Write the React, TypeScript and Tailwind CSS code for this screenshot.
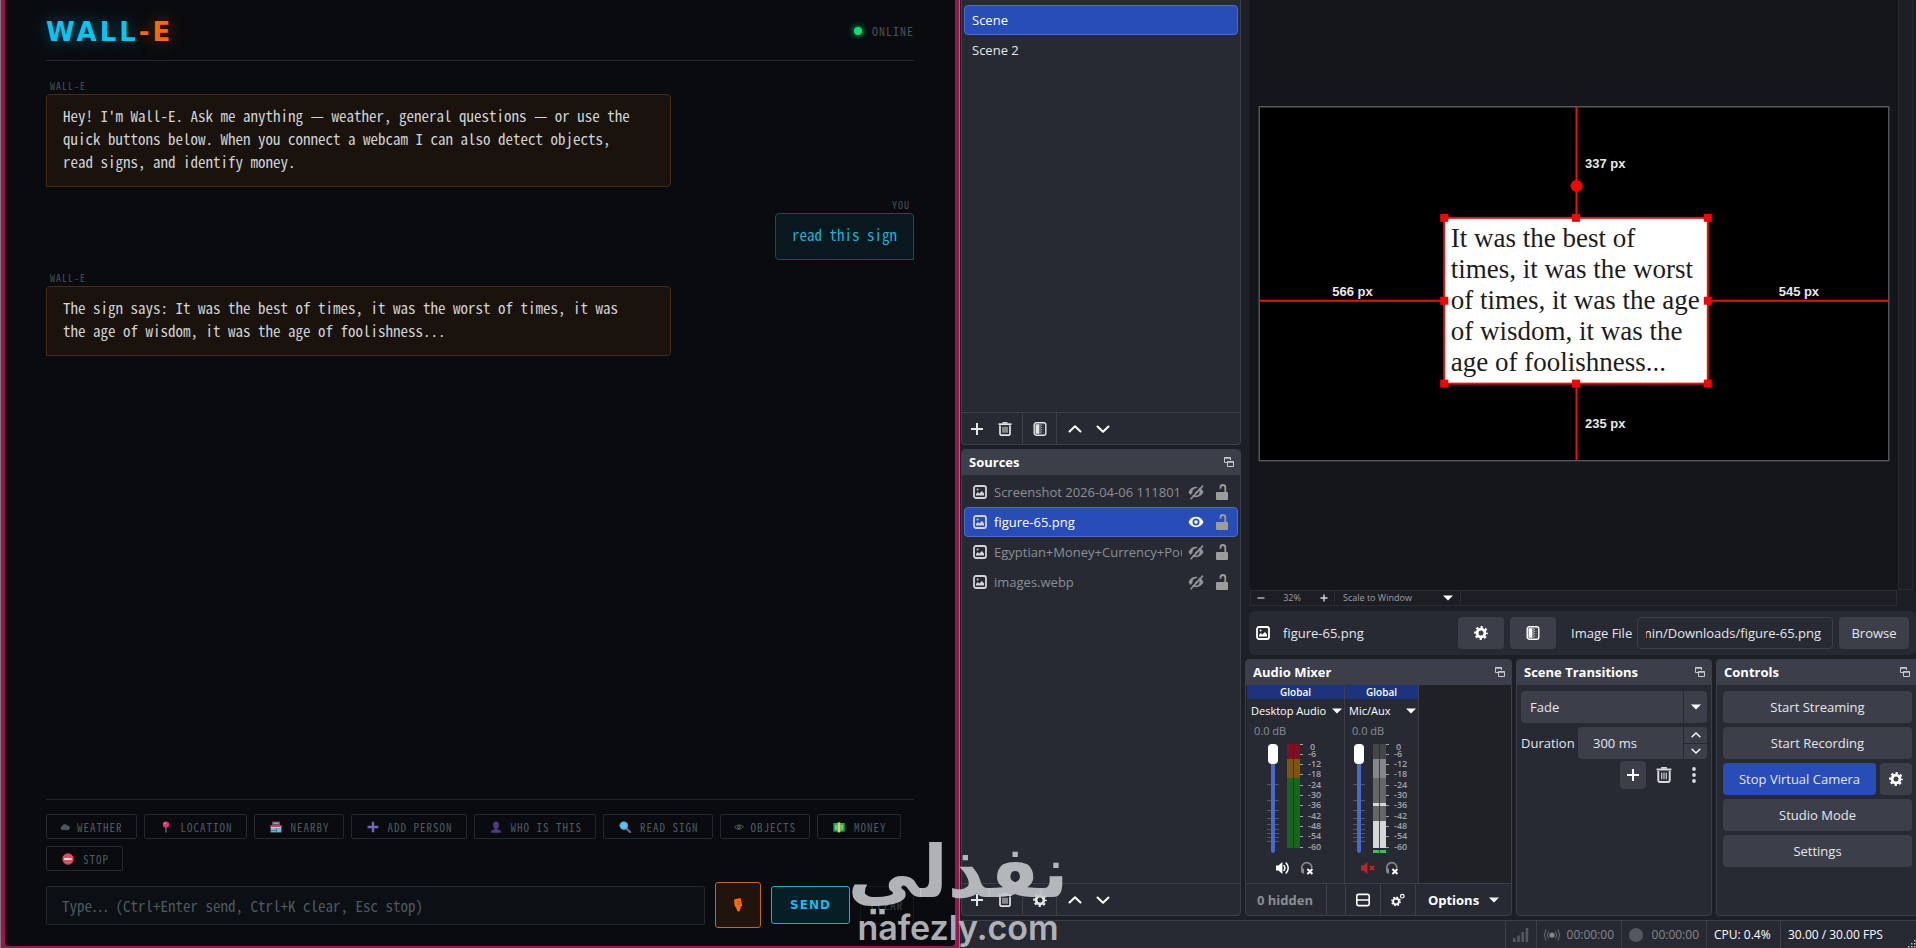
import type { ReactNode } from "react";

/* ---------- shared icons ---------- */

type IconProps = { className?: string };

const PlusIcon = ({ className = "w-3.5 h-3.5" }: IconProps) => (
  <svg className={className} viewBox="0 0 14 14" stroke="currentColor" strokeWidth="2" fill="none">
    <path d="M7 1v12M1 7h12" />
  </svg>
);

const TrashIcon = ({ className = "w-3.5 h-3.5" }: IconProps) => (
  <svg className={className} viewBox="0 0 14 14" fill="none" stroke="currentColor">
    <path d="M0.5 2.2h13" strokeWidth="1.8" />
    <path d="M4.5 0.8h5" strokeWidth="1.4" />
    <path d="M2 3.5v8.2a1.5 1.5 0 0 0 1.5 1.5h7a1.5 1.5 0 0 0 1.5-1.5V3.5" strokeWidth="1.7" />
    <path d="M5 4.8v6M7 4.8v6M9 4.8v6" strokeWidth="1" />
  </svg>
);

const FilterIcon = ({ className = "w-3.5 h-3.5" }: IconProps) => (
  <svg className={className} viewBox="0 0 14 14" fill="none">
    <rect x="1.2" y="0.8" width="11.6" height="12.4" rx="2" stroke="currentColor" strokeWidth="1.4" />
    <path d="M2.5 2.2h3.6v9.6H2.5z" fill="currentColor" />
    <path d="M7 2.2v9.6" stroke="currentColor" strokeWidth="1.2" strokeDasharray="1.2 0.8" />
    <path d="M8.6 2.8v9" stroke="currentColor" strokeWidth="1" strokeDasharray="1 1.2" opacity="0.8" />
    <path d="M10.2 2.2v9.6" stroke="currentColor" strokeWidth="0.8" strokeDasharray="0.8 1.8" opacity="0.6" />
  </svg>
);

const GearIcon = ({ className = "w-3.5 h-3.5" }: IconProps) => (
  <svg className={className} viewBox="0 0 14 14" fill="none" stroke="currentColor">
    <circle cx="7" cy="7" r="3.9" strokeWidth="2.8" />
    <circle cx="7" cy="7" r="5.8" strokeWidth="2.2" strokeDasharray="2.3 2.255" strokeDashoffset="1.15" />
  </svg>
);

const ChevronIcon = ({ down = false, className = "w-3.5 h-3.5" }: IconProps & { down?: boolean }) => (
  <svg className={className} viewBox="0 0 14 14" fill="none" stroke="currentColor" strokeWidth="2" strokeLinecap="round" strokeLinejoin="round">
    {down ? <path d="M1.5 4.5 7 9.8l5.5-5.3" /> : <path d="M1.5 9.5 7 4.2l5.5 5.3" />}
  </svg>
);

const CaretIcon = ({ className = "w-2.5 h-2.5" }: IconProps) => (
  <svg className={className} viewBox="0 0 10 10" fill="currentColor">
    <path d="M0 2.4h10L5 7.6z" />
  </svg>
);

const ImageIcon = ({ className = "w-3.5 h-3.5" }: IconProps) => (
  <svg className={className} viewBox="0 0 14 14" fill="none">
    <rect x="1" y="1" width="12" height="12" rx="2" stroke="currentColor" strokeWidth="1.8" />
    <path d="M3 10.6V9l1.8-2 1.4 1.4L9 6l2 2.4v2.2z" fill="currentColor" />
    <circle cx="4.6" cy="4.6" r="1" fill="currentColor" />
  </svg>
);

const PopoutIcon = () => (
  <svg className="w-2.5 h-2.5 text-[#c8cad0]" viewBox="0 0 10 10" fill="none" stroke="currentColor">
    <path d="M3.5 5.5h-3v-5h6v2.5" />
    <path d="M0.5 1h6" strokeWidth="1.4" />
    <path d="M3.5 4.5h6v5h-6z" />
    <path d="M3.5 5h6" strokeWidth="1.4" />
  </svg>
);

const EyeIcon = () => (
  <svg className="w-4 h-4 text-white" viewBox="0 0 16 16">
    <path d="M0.5 8C2 4.6 4.8 2.8 8 2.8S14 4.6 15.5 8C14 11.4 11.2 13.2 8 13.2S2 11.4 0.5 8z" fill="currentColor" />
    <circle cx="8" cy="8" r="3.5" fill="#284cb8" />
    <circle cx="8" cy="8" r="1.8" fill="currentColor" />
  </svg>
);

const EyeOffIcon = () => (
  <svg className="w-4 h-4 text-[#929498]" viewBox="0 0 16 16">
    <path d="M0.5 8C2 4.6 4.8 2.8 8 2.8S14 4.6 15.5 8C14 11.4 11.2 13.2 8 13.2S2 11.4 0.5 8z" fill="currentColor" />
    <circle cx="8" cy="8" r="3.5" fill="#272a33" />
    <circle cx="8" cy="8" r="1.8" fill="currentColor" />
    <path d="M13.4 0.2 1.2 13.8" stroke="#272a33" strokeWidth="2" />
    <path d="M15 1.6 2.6 15.2" stroke="currentColor" strokeWidth="1.6" />
  </svg>
);

const UnlockIcon = () => (
  <svg className="w-3 h-4 text-[#9c9c98]" viewBox="0 0 12 16" fill="none">
    <rect x="0" y="8" width="12" height="8" rx="1" fill="currentColor" />
    <path d="M9.3 8.5V3.4a2.4 2.4 0 0 0-4.8 0v1.4" stroke="currentColor" strokeWidth="1.8" />
  </svg>
);

/* ---------- chat window ---------- */

const quickActions: { label: string; icon: ReactNode }[] = [
  {
    label: "WEATHER",
    icon: (
      <svg className="w-2.5 h-3" viewBox="0 0 10 12" fill="#4b565c">
        <path d="M2.2 9A2 2 0 0 1 2 5.2 3 3 0 0 1 7.4 4.6 2.2 2.2 0 0 1 7.9 9z" />
      </svg>
    ),
  },
  {
    label: "LOCATION",
    icon: (
      <svg className="w-4 h-3" viewBox="0 0 16 12">
        <path d="M8 5v6.5" stroke="#8e8a99" strokeWidth="1" />
        <circle cx="8" cy="3.6" r="3.2" fill="#e0326f" />
        <circle cx="7" cy="2.6" r="1" fill="#f77fa5" />
      </svg>
    ),
  },
  {
    label: "NEARBY",
    icon: (
      <svg className="w-4 h-3" viewBox="0 0 16 12">
        <rect x="4" y="0.5" width="8" height="3.5" rx="0.6" fill="#5e5466" />
        <path d="M5.5 2.2h5" stroke="#c9c1d3" />
        <rect x="2.6" y="6" width="10.8" height="5.4" fill="#69b7d8" />
        <path d="M2.2 4h11.6v2.6H2.2z" fill="#d3385f" />
        <path d="M3 6.6h10" stroke="#e9e2ee" strokeWidth="0.9" />
        <path d="M8.5 7v4.5M3 9.5h5" stroke="#3a738f" strokeWidth="0.8" />
      </svg>
    ),
  },
  {
    label: "ADD PERSON",
    icon: (
      <svg className="w-4 h-3" viewBox="0 0 16 12">
        <path d="M8 0.8v10.4M2.6 6h10.8" stroke="#7763c4" strokeWidth="2.4" />
      </svg>
    ),
  },
  {
    label: "WHO IS THIS",
    icon: (
      <svg className="w-4 h-3" viewBox="0 0 16 12" fill="#4f3b80">
        <ellipse cx="8" cy="4" rx="3" ry="3.6" />
        <path d="M6.8 6h2.4v2.2l3 1q0.8 0.6 0.8 2.6H3q0-2 0.8-2.6l3-1z" />
      </svg>
    ),
  },
  {
    label: "READ SIGN",
    icon: (
      <svg className="w-4 h-3" viewBox="0 0 16 12">
        <path d="M9.6 7.6 13 11" stroke="#85588f" strokeWidth="2.4" strokeLinecap="round" />
        <circle cx="6.8" cy="4.6" r="4.2" fill="#5cc4ea" />
        <circle cx="6.8" cy="4.6" r="3.8" fill="none" stroke="#3e8fb5" strokeWidth="0.7" />
      </svg>
    ),
  },
  {
    label: "OBJECTS",
    icon: (
      <svg className="w-2.5 h-3" viewBox="0 0 10 12" fill="none" stroke="#5b666c">
        <path d="M0.6 6.2C2.4 3.4 7 3.4 9.4 5.6 7.4 8.8 2.8 9 0.6 6.2z" strokeWidth="0.9" />
        <circle cx="5" cy="6.2" r="1.4" />
      </svg>
    ),
  },
  {
    label: "MONEY",
    icon: (
      <svg className="w-4 h-3" viewBox="0 0 16 12">
        <rect x="2.4" y="2" width="11.2" height="8.6" fill="#1fae58" />
        <path d="M4 4h2.4v4.4H4zM9.8 4h2.4v4.4H9.8z" fill="#56d186" />
        <rect x="6.7" y="1.4" width="2.6" height="10" fill="#e2d54e" />
      </svg>
    ),
  },
  {
    label: "STOP",
    icon: (
      <svg className="w-4 h-3" viewBox="0 0 16 12">
        <circle cx="8" cy="6" r="5.7" fill="#f0455f" />
        <path d="M4.2 6h7.6" stroke="#fbe8ee" strokeWidth="2" />
      </svg>
    ),
  },
];

const messages = [
  {
    from: "WALL-E",
    text: "Hey! I'm Wall-E. Ask me anything — weather, general questions — or use the quick buttons below. When you connect a webcam I can also detect objects, read signs, and identify money.",
  },
  { from: "YOU", text: "read this sign" },
  {
    from: "WALL-E",
    text: "The sign says: It was the best of times, it was the worst of times, it was the age of wisdom, it was the age of foolishness...",
  },
];

function Chat() {
  return (
    <div className="border-l border-r border-[#8b7480] bg-[#98184d] px-1 pb-[2px] min-w-0">
      <main className="flex flex-col h-full rounded-b bg-[#090b0f] px-[41px] font-['Noto_Sans_Mono_CJK_JP','DejaVu_Sans_Mono',monospace]">
        <header className="flex items-center justify-between h-[61px] shrink-0 border-b border-[#22282c]">
          <h1 className="pt-1 font-['DejaVu_Sans',sans-serif] font-bold text-[26px] leading-6 tracking-[3px] text-[#00c8f5] [text-shadow:0_0_18px_#00c8f570]">
            WALL<span className="text-[#f56b07] [text-shadow:0_0_18px_#f56b0770]">-E</span>
          </h1>
          <div className="flex items-center gap-2.5 pt-0.5">
            <span className="w-2 h-2 rounded-full bg-[#00e676] shadow-[0_0_6px_#00e676]" />
            <span className="text-xs leading-4 tracking-[1px] text-[#4a5258]">ONLINE</span>
          </div>
        </header>

        <div className="flex flex-col flex-1 min-h-0 gap-2.5 pt-[17px]">
          {messages.map((m, i) => {
            const you = m.from === "YOU";
            return (
              <div key={i} className={you ? "flex flex-col items-end" : "flex flex-col items-start"}>
                <span className="px-1 text-[10px] leading-4 tracking-[1px] text-[#4a5157]">{m.from}</span>
                <p
                  className={
                    you
                      ? "max-w-[72%] border border-[#12505e] rounded-t rounded-bl bg-[#08181e] px-4 pt-[9px] pb-[13px] text-[15px] leading-[23px] text-[#17b4d8]"
                      : "max-w-[72%] border border-[#4a2a12] rounded-t rounded-br bg-[#1a120d] pl-4 pr-8 pt-[9px] pb-[13px] text-[15px] leading-[23px] text-[#d0d4d7]"
                  }
                >
                  {m.text}
                </p>
              </div>
            );
          })}
        </div>

        <div className="flex flex-wrap gap-[7px] border-t border-[#1e2629] pt-3.5">
          {quickActions.map((a) => (
            <button
              key={a.label}
              className="flex items-center gap-[7px] h-[25px] px-[13px] border border-[#22292c] rounded-xs text-[11px] leading-4 tracking-[1px] text-[#4e5a60]"
            >
              {a.icon}
              {a.label}
            </button>
          ))}
        </div>

        <form className="flex items-center gap-2.5 pt-[11px] pb-[18px]">
          <input
            type="text"
            aria-label="Message"
            placeholder="Type… (Ctrl+Enter send, Ctrl+K clear, Esc stop)"
            className="flex-1 min-w-0 h-[39px] px-[15px] border border-[#22292c] rounded-xs bg-[#0c1015] text-[15px] placeholder:text-[#4e5a60]"
          />
          <button type="button" aria-label="Voice input" className="flex items-center justify-center w-[46px] h-[46px] border border-[#c9651a] rounded-[3px] bg-[#21140c]">
            <svg className="w-3 h-4" viewBox="0 0 12 16" fill="#ff6a0a">
              <path d="M2 2.4 8.6 1l1.6 7.8-3.4 1.8-4-1.2z" />
              <path d="M3.4 9 9.6 8 7.4 14.4H5.6z" />
              <path d="M5 4.6h3M5.4 7h3" stroke="#a83f04" strokeWidth="0.7" />
            </svg>
          </button>
          <button type="button" className="w-[79px] h-[38px] border border-[#29a9c8] rounded-[3px] bg-[#061e25] font-['DejaVu_Sans',sans-serif] font-bold text-xs tracking-[1px] text-[#16bdf0]">
            SEND
          </button>
          <button type="button" className="w-[54px] h-[38px] border border-[#14181c] rounded-[3px] text-[11px] tracking-[1px] text-[#3a4248]">
            CLEAR
          </button>
        </form>
      </main>
    </div>
  );
}

/* ---------- studio docks ---------- */

function DockHeader({ title }: { title: string }) {
  return (
    <div className="flex items-center justify-between h-[25px] shrink-0 pl-[7px] pr-1.5 pb-0.5 bg-[#3c3f4a]">
      <h2 className="font-bold text-[13px] leading-4 text-white">{title}</h2>
      <button aria-label={"Undock " + title}>
        <PopoutIcon />
      </button>
    </div>
  );
}

function ListToolbar({ middle, name }: { middle: ReactNode; name: string }) {
  return (
    <div className="flex h-8 shrink-0 border-t border-[#3c3f4a] text-[#e4e5e8]">
      <div className="flex items-center gap-3.5 w-[60px] pl-2">
        <button aria-label={"Add " + name}><PlusIcon /></button>
        <button aria-label={"Remove " + name}><TrashIcon /></button>
      </div>
      <div className="flex items-center justify-center w-[35px] border-x border-[#3c3f4a]">{middle}</div>
      <div className="flex items-center gap-3.5 pl-[11px] text-white">
        <button aria-label={"Move " + name + " up"}><ChevronIcon /></button>
        <button aria-label={"Move " + name + " down"}><ChevronIcon down /></button>
      </div>
    </div>
  );
}

const sources = [
  { name: "Screenshot 2026-04-06 111801.png", visible: false },
  { name: "figure-65.png", visible: true },
  { name: "Egyptian+Money+Currency+Pound.jpg", visible: false },
  { name: "images.webp", visible: false },
];

function SceneColumn() {
  return (
    <div className="grid grid-rows-[445fr_467fr] gap-1 w-[281px] shrink-0 pl-px">
      <section className="flex flex-col min-h-0 border border-t-0 border-[#3c3f4a] rounded-b bg-[#272a33]">
        <ul className="flex-1 px-0.5 pt-[5px]">
          <li className="flex items-center h-[30px] px-[7px] border border-[#4a6bd0] rounded bg-[#284cb8] text-white">Scene</li>
          <li className="flex items-center h-[30px] px-2">Scene 2</li>
        </ul>
        <ListToolbar name="scene" middle={<button aria-label="Scene filters"><FilterIcon /></button>} />
      </section>

      <section className="flex flex-col min-h-0 border border-[#3c3f4a] rounded overflow-hidden bg-[#272a33]">
        <DockHeader title="Sources" />
        <ul className="flex-1 px-0.5 pt-0.5">
          {sources.map((s) => (
            <li
              key={s.name}
              className={
                s.visible
                  ? "flex items-center h-[30px] pl-2 pr-[9px] border border-[#4a6bd0] rounded bg-[#284cb8] text-white"
                  : "flex items-center h-[30px] pl-2 pr-[9px] border border-transparent text-[#8c8e94]"
              }
            >
              <ImageIcon className="w-3.5 h-3.5 shrink-0 text-[#d2d4d8]" />
              <span className="flex-1 min-w-0 ml-[7px] mr-1.5 overflow-hidden whitespace-nowrap">{s.name}</span>
              <button className="shrink-0" aria-label={"Toggle " + s.name}>{s.visible ? <EyeIcon /> : <EyeOffIcon />}</button>
              <button className="shrink-0 ml-3" aria-label={"Lock " + s.name}><UnlockIcon /></button>
            </li>
          ))}
        </ul>
        <ListToolbar name="source" middle={<button aria-label="Source properties"><GearIcon /></button>} />
      </section>
    </div>
  );
}

const handles = [
  [186, 112], [318, 112], [450, 112],
  [186, 195], [450, 195],
  [186, 278], [318, 278], [450, 278],
];

function Preview() {
  return (
    <div className="flex flex-col flex-1 min-h-0 pl-[5px] pr-[3px]">
      <div className="flex flex-1 min-h-0">
        <div className="flex flex-1 items-center justify-center pb-[22px] bg-[#14161b]">
          <div className="relative w-[calc(100%-16px)] aspect-video bg-black">
            <p className="absolute left-[29.4%] top-[31.5%] right-[28.8%] bottom-[22%] pl-[7px] pt-[5px] bg-white font-['Liberation_Serif',serif] text-[27px] leading-[31px] text-[#1c1c1c] whitespace-nowrap">
              It was the best of<br />
              times, it was the worst<br />
              of times, it was the age<br />
              of wisdom, it was the<br />
              age of foolishness...
            </p>
            <svg className="absolute inset-0 w-full h-full" viewBox="0 0 632 356" fill="none">
              <rect x="0.75" y="0.75" width="630.5" height="354.5" stroke="#58595b" strokeWidth="1.5" />
              <path d="M318.5 1v111M318.5 278v77M1 195h185M450 195h181" stroke="#f01010" strokeWidth="2" />
              <rect x="186" y="112" width="264" height="166" stroke="#e01515" strokeWidth="2" />
              <circle cx="318.5" cy="80" r="6" fill="#ff0000" />
              {handles.map(([x, y]) => (
                <rect key={x + "-" + y} x={x - 4} y={y - 4} width="8" height="8" fill="#ff0000" />
              ))}
              <g fill="#e8e8e8" fontFamily="Liberation Sans, Arial, sans-serif" fontWeight="bold" fontSize="13">
                <text x="327" y="62">337 px</text>
                <text x="327" y="322">235 px</text>
                <text x="74" y="190">566 px</text>
                <text x="521" y="190">545 px</text>
              </g>
            </svg>
          </div>
        </div>
        <div className="w-[15px] border border-t-0 border-[#282a30] bg-[#1c1e23]" />
      </div>
      <div className="flex items-center h-4 mr-4 border border-[#2a2c32] bg-[#1c1e23] text-[9px] text-[#9c9ea4]">
        <button className="w-5" aria-label="Zoom out">
          <svg className="w-2 h-2 mx-auto" viewBox="0 0 8 8" stroke="#b4b6ba" strokeWidth="1.4"><path d="M0.5 4h7" /></svg>
        </button>
        <span className="w-[26px] ml-2 text-center">32%</span>
        <button className="w-5 ml-[9px]" aria-label="Zoom in">
          <svg className="w-2 h-2 mx-auto" viewBox="0 0 8 8" stroke="#d4d6da" strokeWidth="1.4"><path d="M0.5 4h7M4 0.5v7" /></svg>
        </button>
        <button className="flex items-center w-[127px] h-full border-x border-[#2a2c32] pl-2">
          <span className="flex-1 text-left">Scale to Window</span>
          <span className="flex justify-center w-6 text-white"><CaretIcon className="w-2.5 h-3" /></span>
        </button>
      </div>
    </div>
  );
}

function SourceBar() {
  return (
    <div className="flex items-center h-11 shrink-0 mt-[5px] mb-1 ml-1 pl-[7px] pr-[7px] rounded-md bg-[#272a33]">
      <ImageIcon className="w-3.5 h-3.5 text-white" />
      <span className="flex-1 ml-[13px]">figure-65.png</span>
      <button aria-label="Properties" className="flex items-center justify-center w-[46px] h-8 rounded bg-[#3c3f4a] text-white"><GearIcon /></button>
      <button aria-label="Filters" className="flex items-center justify-center w-[46px] h-8 ml-1.5 rounded bg-[#3c3f4a] text-white"><FilterIcon /></button>
      <label htmlFor="image-file" className="w-[60px] ml-[15px] whitespace-nowrap">Image File</label>
      <span className="flex items-center w-[196px] h-8 ml-1.5 pl-2 pr-[11px] border border-[#3c3f4a] rounded">
        <input id="image-file" type="text" readOnly dir="rtl" defaultValue="C:/Users/Admin/Downloads/figure-65.png" className="w-full bg-transparent outline-none text-left" />
      </span>
      <button className="w-[70px] h-8 ml-1.5 rounded bg-[#3c3f4a]">Browse</button>
    </div>
  );
}

const scale: [string, number][] = [
  ["0", 3], ["-6", 10], ["-12", 20], ["-18", 30], ["-24", 41], ["-30", 51],
  ["-36", 61], ["-42", 72], ["-48", 82], ["-54", 92], ["-60", 103],
];

const faderTicks = [40, 56, 66, 74, 80, 85, 89, 93, 97];

function Strip({ name, muted = false }: { name: string; muted?: boolean }) {
  return (
    <div className={muted ? "flex flex-col w-[74px] border-r border-[#3c3f4a] bg-[#272a33]" : "flex flex-col w-[98px] border-r border-[#3c3f4a] bg-[#272a33]"}>
      <div className="h-3.5 bg-[#1b347d] text-center font-semibold text-[10px] leading-[14px] text-white">Global</div>
      <button className="flex items-center justify-between mt-0.5 h-5 pl-1 pr-0.5 text-[11px] text-white whitespace-nowrap">
        {name}
        <CaretIcon className="w-2.5 h-2.5" />
      </button>
      <div className="pl-[7px] h-5 leading-5 text-[11px] text-[#8c8e94]">0.0 dB</div>
      <div className={muted ? "flex h-[110px] mt-[3px] pl-[8px]" : "flex h-[110px] mt-[3px] pl-5"}>
        <div className="relative w-3 h-[110px]">
          <svg className="absolute inset-0 w-3 h-[110px]" viewBox="0 0 12 110" stroke="#555862">
            {faderTicks.map((y) => (
              <path key={y} d={`M0 ${y + 0.5}h12`} />
            ))}
          </svg>
          <input
            type="range"
            aria-label={name + " volume"}
            defaultValue={100}
            className="absolute inset-0 w-3 h-[109px] appearance-none bg-transparent [writing-mode:vertical-lr] [direction:rtl] [&::-webkit-slider-runnable-track]:w-1 [&::-webkit-slider-runnable-track]:rounded-full [&::-webkit-slider-runnable-track]:bg-[#4a69cd] [&::-webkit-slider-thumb]:appearance-none [&::-webkit-slider-thumb]:w-2.5 [&::-webkit-slider-thumb]:h-5 [&::-webkit-slider-thumb]:-ml-[3px] [&::-webkit-slider-thumb]:rounded [&::-webkit-slider-thumb]:bg-white"
          />
        </div>
        <svg className="w-10 h-[110px] ml-2" viewBox="0 0 40 110">
          <rect y="0" width="13" height="15" fill={muted ? "#454648" : "#7f0f22"} />
          <rect y="15" width="13" height="19" fill={muted ? "#868789" : "#7d5511"} />
          <rect y="34" width="13" height="70" fill={muted ? "#656668" : "#17661f"} />
          {muted && <rect y="59" width="13" height="3" fill="#d6d7d8" />}
          {muted && <rect y="77" width="13" height="27" fill="#d6d7d8" />}
          {muted && <rect y="106" width="13" height="3" fill="#3fbf57" />}
          <path d="M6.5 0v110" stroke="#272a33" strokeWidth="0.8" />
          {scale.map(([label, y]) => (
            <g key={label}>
              <path d={`M13 ${y === 3 ? 0.5 : y + 0.5}h3`} stroke="#a2a4a9" />
              <text x={label === "0" ? 23 : 21} y={y + 3} fill="#a2a4a9" fontSize="9" fontWeight="600">{label}</text>
            </g>
          ))}
        </svg>
      </div>
      <div className={muted ? "flex gap-2.5 mt-[7px] pl-4" : "flex gap-2.5 mt-[7px] pl-[29px]"}>
        <button aria-label={"Mute " + name}>
          {muted ? (
            <svg className="w-3.5 h-3.5" viewBox="0 0 14 14" fill="#c81f28">
              <path d="M0 4.6h2.4L6.4 1v12L2.4 9.4H0z" />
              <path d="m9 4.8 4.2 4.4M13.2 4.8 9 9.2" stroke="#c81f28" strokeWidth="1.8" />
            </svg>
          ) : (
            <svg className="w-3.5 h-3.5" viewBox="0 0 14 14" fill="#fff">
              <path d="M0 4.6h2.4L6.4 1v12L2.4 9.4H0z" />
              <path d="M8 4.6q1.8 2.4 0 4.8M10.2 2q4 5 0 10" stroke="#fff" strokeWidth="1.5" fill="none" strokeLinecap="round" />
            </svg>
          )}
        </button>
        <button aria-label={"Monitor " + name}>
          <svg className="w-3.5 h-3.5" viewBox="0 0 14 14" fill="none">
            <path d="M1.8 10V6.6a5 5 0 0 1 10 0V7" stroke="#85878d" strokeWidth="1.7" />
            <path d="M1 7.5h3v5H2.6Q1 12 1 10z" fill="#85878d" />
            <path d="m7.4 8 5 5M12.4 8l-5 5" stroke="#fff" strokeWidth="2" />
          </svg>
        </button>
      </div>
    </div>
  );
}

function Mixer() {
  return (
    <section className="flex flex-col min-w-0 border border-[#3c3f4a] rounded overflow-hidden bg-[#272a33]">
      <DockHeader title="Audio Mixer" />
      <div className="flex flex-1 min-h-0 pl-px bg-[#1f2126]">
        <Strip name="Desktop Audio" />
        <Strip name="Mic/Aux" muted />
      </div>
      <div className="flex items-stretch h-8 shrink-0 border-t border-[#3c3f4a] font-bold">
        <span className="flex items-center w-[81px] pl-[11px] border-r border-[#3c3f4a] text-[#8c8e94]">0 hidden</span>
        <span className="w-[19px] border-r border-[#3c3f4a]" />
        <button aria-label="Layout" className="flex items-center justify-center w-[35px] border-r border-[#3c3f4a]">
          <svg className="w-3.5 h-3.5" viewBox="0 0 14 14" fill="none" stroke="#fff" strokeWidth="1.6">
            <rect x="0.8" y="1.4" width="12.4" height="11.2" rx="1.6" />
            <path d="M1 7h12" />
          </svg>
        </button>
        <button aria-label="Advanced audio properties" className="flex items-center justify-center w-[35px] border-r border-[#3c3f4a]">
          <svg className="w-3.5 h-3.5" viewBox="0 0 14 14" fill="none" stroke="#fff">
            <circle cx="5" cy="8.4" r="2.9" strokeWidth="1.8" />
            <circle cx="5" cy="8.4" r="4.2" strokeWidth="1.4" strokeDasharray="1.65 1.65" />
            <circle cx="11.3" cy="3.2" r="1.8" strokeWidth="1.2" />
          </svg>
        </button>
        <button className="flex flex-1 items-center justify-center gap-2.5 text-white">
          Options <CaretIcon />
        </button>
      </div>
    </section>
  );
}

function Transitions() {
  return (
    <section className="flex flex-col min-w-0 border border-[#3c3f4a] rounded overflow-hidden bg-[#272a33]">
      <DockHeader title="Scene Transitions" />
      <div className="flex flex-col gap-1 px-1 pt-1.5">
        <div className="flex items-center h-8 rounded bg-[#3c3f4a]">
          <select aria-label="Transition" defaultValue="Fade" className="flex-1 h-full appearance-none bg-transparent pl-[9px] outline-none">
            <option>Fade</option>
          </select>
          <span className="flex items-center justify-center w-6 h-full border-l border-[#272a33] text-white"><CaretIcon /></span>
        </div>
        <div className="flex items-center h-8">
          <label htmlFor="duration" className="w-[57px] shrink-0">Duration</label>
          <div className="flex flex-1 min-w-0 h-8 rounded bg-[#3c3f4a]">
            <input id="duration" type="text" defaultValue="300 ms" className="flex-1 min-w-0 bg-transparent pl-[15px] outline-none" />
            <div className="flex flex-col w-6 shrink-0 border-l border-[#272a33] text-white">
              <button aria-label="Increase" className="flex flex-1 items-center justify-center border-b border-[#272a33]"><ChevronIcon className="w-2.5 h-2.5" /></button>
              <button aria-label="Decrease" className="flex flex-1 items-center justify-center"><ChevronIcon down className="w-2.5 h-2.5" /></button>
            </div>
          </div>
        </div>
        <div className="flex items-center justify-end h-7 -mt-0.5 pr-1.5 text-[#d8dade]">
          <button aria-label="Add transition" className="flex items-center justify-center w-[26px] h-7 rounded bg-[#3c3f4a] text-white"><PlusIcon /></button>
          <button aria-label="Remove transition" className="ml-2.5"><TrashIcon className="w-4 h-4" /></button>
          <button aria-label="Transition menu" className="ml-[15px]">
            <svg className="w-3.5 h-4" viewBox="0 0 14 16" fill="currentColor">
              <circle cx="7" cy="2" r="1.9" />
              <circle cx="7" cy="8" r="1.9" />
              <circle cx="7" cy="14" r="1.9" />
            </svg>
          </button>
        </div>
      </div>
    </section>
  );
}

function Controls() {
  return (
    <section className="flex flex-col min-w-0 border border-r-0 border-[#3c3f4a] rounded-l overflow-hidden bg-[#272a33]">
      <DockHeader title="Controls" />
      <div className="flex flex-col gap-1 pt-1.5 pl-1.5 pr-1">
        <button className="h-8 rounded bg-[#3c3f4a]">Start Streaming</button>
        <button className="h-8 rounded bg-[#3c3f4a]">Start Recording</button>
        <div className="flex gap-1">
          <button className="flex-1 h-8 rounded bg-[#284cb8]">Stop Virtual Camera</button>
          <button aria-label="Virtual camera settings" className="flex items-center justify-center w-8 h-8 rounded bg-[#3c3f4a] text-white"><GearIcon /></button>
        </div>
        <button className="h-8 rounded bg-[#3c3f4a]">Studio Mode</button>
        <button className="h-8 rounded bg-[#3c3f4a]">Settings</button>
      </div>
    </section>
  );
}

function StatusBar() {
  return (
    <footer className="flex justify-end h-7 shrink-0 border-t border-[#3c3f4a] bg-[#272a33] text-[12px] text-[#85878d]">
      <span className="flex items-center justify-center w-[31px] border-l border-[#3c3f4a]">
        <svg className="w-4 h-4" viewBox="0 0 16 16" fill="#55585f">
          <path d="M0 11h2.6v4H0zM4.2 8.4h2.6V15H4.2zM8.4 5H11v10H8.4zM12.6 1h2.6v14h-2.6z" />
        </svg>
      </span>
      <span className="flex items-center justify-between w-[85px] px-[7px] border-l border-[#3c3f4a]">
        <svg className="w-4 h-3.5" viewBox="0 0 16 14" fill="none" stroke="#6a6d74" strokeWidth="1">
          <circle cx="8" cy="7" r="2.6" fill="#85878d" stroke="none" />
          <path d="M4.6 3.4q-2.4 3.6 0 7.2M2 1.4q-3 5.6 0 11.2M11.4 3.4q2.4 3.6 0 7.2M14 1.4q3 5.6 0 11.2" />
        </svg>
        00:00:00
      </span>
      <span className="flex items-center justify-between w-[85px] px-[7px] border-l border-[#3c3f4a]">
        <span className="w-3.5 h-3.5 rounded-full bg-[#55585f]" />
        00:00:00
      </span>
      <span className="flex items-center w-[74px] pl-[7px] border-l border-[#3c3f4a] text-white whitespace-nowrap">CPU: 0.4%</span>
      <span className="flex items-center w-[128px] pl-[7px] border-l border-[#3c3f4a] text-white whitespace-nowrap">30.00 / 30.00 FPS</span>
      <svg className="w-2 h-2 self-end" viewBox="0 0 8 8" fill="#b9bbc0">
        <path d="M6 0h1.6v1.6H6zM3 3h1.6v1.6H3zM6 3h1.6v1.6H6zM0 6h1.6v1.6H0zM3 6h1.6v1.6H3zM6 6h1.6v1.6H6z" />
      </svg>
    </footer>
  );
}

export default function App() {
  return (
    <div className="relative grid grid-cols-[960fr_956fr] h-screen overflow-hidden bg-[#1d1f26]">
      <Chat />

      <div className="flex flex-col min-w-0 font-['Open_Sans','Noto_Sans',sans-serif] text-[13px] leading-4 text-[#e6e7ea]">
        <div className="flex flex-1 gap-1 min-h-0 pb-1">
          <SceneColumn />
          <div className="flex flex-col flex-1 min-w-0">
            <Preview />
            <SourceBar />
            <div className="grid grid-cols-[267fr_196fr_200fr] gap-1 h-[257px] shrink-0">
              <Mixer />
              <Transitions />
              <Controls />
            </div>
          </div>
        </div>
        <StatusBar />
      </div>

      {/* watermark */}
      <div className="absolute bottom-0 left-1/2 -translate-x-1/2 flex flex-col items-center text-[#c3c5c9]/90 pointer-events-none whitespace-nowrap">
        <span lang="ar" dir="rtl" className="font-['DejaVu_Sans',sans-serif] font-bold text-[72px] leading-[72px]">نفذلي</span>
        <span className="font-['Inter',sans-serif] font-semibold text-[34px] leading-10">nafezly.com</span>
      </div>
    </div>
  );
}
